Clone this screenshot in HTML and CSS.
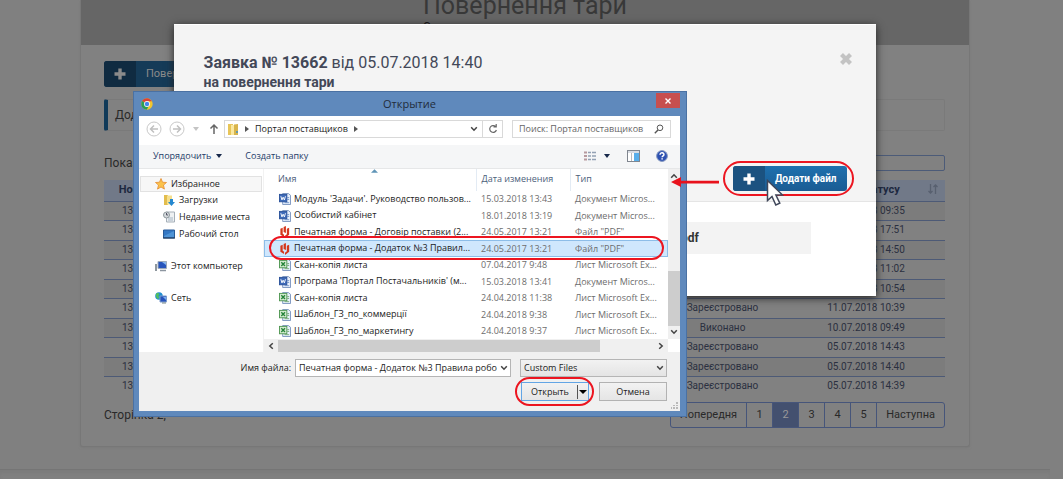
FILE: index.html
```html
<!DOCTYPE html>
<html lang="uk">
<head>
<meta charset="utf-8">
<title>Повернення тари</title>
<link rel="stylesheet" href="styles.css">
</head>
<body>
<svg class="defs" aria-hidden="true">
  <symbol id="plus" viewBox="0 0 12 12"><path d="M4.3 0.5h3.4v3.8h3.8v3.4H7.700v3.800H4.300V7.700H.5V4.300h3.800z" fill="currentColor"/></symbol>
  <symbol id="chevron" viewBox="0 0 8 8"><path d="M1.200 2.200 4 5.200 6.800 2.200" fill="none" stroke="currentColor" stroke-width="1.500"/></symbol>
  <symbol id="caret" viewBox="0 0 8 8"><path d="M1 2h6L4 6z" fill="currentColor"/></symbol>
  <symbol id="word" viewBox="0 0 13 13"><path d="M4 .5h6l2.500 2v10H4z" fill="#e9f1fc" stroke="#7691bd"/><path d="M9 5h2M9 7h2M6 10.500h5" stroke="#6f92c9"/><rect x=".5" y="1.500" width="8" height="8" fill="#3d6ab8" stroke="#2b529a"/><path d="m2 3.500 1.200 4 1.300-3 1.300 3L7 3.500" fill="none" stroke="#fff"/></symbol>
  <symbol id="excel" viewBox="0 0 13 13"><path d="M4 .5h6l2.500 2v10H4z" fill="#e9f1fc" stroke="#7691bd"/><path d="M9 5h2M9 7h2M6 10.500h5" stroke="#72a874"/><rect x=".5" y="1.500" width="8" height="8" fill="#d5ecd0" stroke="#4d9550"/><path d="m2.500 3.500 4 4m0-4-4 4" fill="none" stroke="#26833a" stroke-width="1.500"/></symbol>
  <symbol id="pdf" viewBox="0 0 13 13"><path d="M1.500 3 4 2v6.500l1.500 1v2.500L1.500 9.500zM5 1l2.500-1v7.500L5 6.500zM8.500 3 11 2v7.500L6.500 13v-2.500l2-1.500z" fill="#d5371c"/></symbol>
</svg>

<div class="stage">
  <main class="card">
    <header class="banner"><h1>Повернення тари</h1><p>С</p></header>
    <div class="card-body">
      <button class="action muted"><span class="action-icon"><svg><use href="#plus"/></svg></span><span class="action-text">Повернення</span></button>
      <div class="note">Додати</div>
      <div class="filter"><label for="search">Показати</label><input id="search" type="text"></div>
      <table class="requests">
        <colgroup><col class="c-num"><col><col class="c-status"><col class="c-date"></colgroup>
        <thead><tr><th>Номер</th><th></th><th>Статус</th><th>Дата статусу<svg class="sort" viewBox="0 0 10 10"><path d="M2.500 0v9M.5 7l2 2 2-2M7.500 10V1M5.500 3l2-2 2 2" fill="none" stroke="currentColor" stroke-width="1.300"/></svg></th></tr></thead>
        <tbody>
          <tr><td>13671</td><td></td><td>Виконано</td><td>12.07.2018 09:35</td></tr>
          <tr><td>13670</td><td></td><td>Виконано</td><td>11.07.2018 17:51</td></tr>
          <tr><td>13669</td><td></td><td>Виконано</td><td>11.07.2018 14:50</td></tr>
          <tr><td>13668</td><td></td><td>Виконано</td><td>11.07.2018 11:02</td></tr>
          <tr><td>13667</td><td></td><td>Виконано</td><td>11.07.2018 10:54</td></tr>
          <tr><td>13666</td><td></td><td>Зареєстровано</td><td>11.07.2018 10:39</td></tr>
          <tr><td>13665</td><td></td><td>Виконано</td><td>10.07.2018 09:49</td></tr>
          <tr><td>13663</td><td></td><td>Зареєстровано</td><td>05.07.2018 14:43</td></tr>
          <tr><td>13662</td><td></td><td>Зареєстровано</td><td>05.07.2018 14:40</td></tr>
          <tr><td>13661</td><td></td><td>Зареєстровано</td><td>05.07.2018 14:39</td></tr>
        </tbody>
      </table>
      <div class="table-foot">
        <span>Сторінка 2,</span>
        <nav class="pages"><a href="#">Попередня</a><a href="#">1</a><a href="#" class="current">2</a><a href="#">3</a><a href="#">4</a><a href="#">5</a><a href="#">Наступна</a></nav>
      </div>
    </div>
  </main>
  <footer class="site-foot"></footer>

  <section class="modal">
    <div class="modal-head">
      <div class="modal-title">
        <h2><b>Заявка № 13662</b> від 05.07.2018 14:40</h2>
        <button class="modal-close" aria-label="Закрити"><svg viewBox="0 0 14 14"><path d="M2.500 2.500l9 9m0-9-9 9" stroke="currentColor" stroke-width="4.200"/></svg></button>
      </div>
      <p>на повернення тари</p>
      <button class="action bright"><span class="action-icon"><svg><use href="#plus"/></svg></span><span class="action-text">Додати файл</span></button>
    </div>
    <div class="modal-body"><div class="attachment">.pdf</div></div>
  </section>

  <section class="dialog">
    <div class="titlebar">
      <svg class="chrome" viewBox="0 0 12 12"><circle cx="6" cy="6" r="5.700" fill="#f3c62e"/><path d="M6 6 1.100 3.100A5.700 5.700 0 0 1 10.900 3.200H6z" fill="#dc4336"/><path d="M1.100 3.100A5.700 5.700 0 0 0 5.700 11.700L8 7.500 6 6z" fill="#2a9e57"/><circle cx="6" cy="6" r="2.900" fill="#fff"/><circle cx="6" cy="6" r="2.200" fill="#4686ea"/></svg>
      <span class="title">Открытие</span>
      <button class="win-close" aria-label="Закрыть"><svg viewBox="0 0 8 8"><path d="m1.500 1.500 5 5m0-5-5 5" stroke="#fff" stroke-width="1.400"/></svg></button>
    </div>
    <div class="client">
      <div class="address-row">
        <button class="round" aria-label="Назад"><svg viewBox="0 0 16 16"><circle cx="8" cy="8" r="7" fill="none" stroke="#c9c9c9"/><path d="M12 8H4.500M8 4.500 4.500 8 8 11.500" fill="none" stroke="#c0c0c0" stroke-width="1.500"/></svg></button>
        <button class="round" aria-label="Вперёд"><svg viewBox="0 0 16 16"><circle cx="8" cy="8" r="7" fill="none" stroke="#c9c9c9"/><path d="M4 8h7.500M8 4.500 11.500 8 8 11.500" fill="none" stroke="#c0c0c0" stroke-width="1.500"/></svg></button>
        <svg class="s8 pale"><use href="#caret"/></svg>
        <button class="up" aria-label="Вверх"><svg viewBox="0 0 10 12"><path d="M5 11V2M1.500 5.500 5 2l3.500 3.500" fill="none" stroke="#666" stroke-width="1.500"/></svg></button>
        <div class="path">
          <svg class="folder" viewBox="0 0 12 13"><path d="M1 1h5v11H1z" fill="#e8c558"/><path d="M4 2h4v10H4z" fill="#fae8a0"/><path d="M7 1.500 11 1v11H7z" fill="#d9b54c"/><path d="M9 8h2v2H9z" fill="#6299b0"/></svg>
          <svg class="s8"><path d="m2 1 4 3-4 3z" fill="#555"/></svg>
          <span>Портал поставщиков</span>
          <svg class="s8"><path d="m2 1 4 3-4 3z" fill="#555"/></svg>
          <svg class="s8 end"><use href="#chevron"/></svg>
          <button class="refresh" aria-label="Обновить"><svg viewBox="0 0 10 10"><path d="M7.500 2.500A3.400 3.400 0 1 0 8.400 6M5.500 2.800h2.700V0" fill="none" stroke="#666" stroke-width="1.200"/></svg></button>
        </div>
        <div class="find"><input type="text" aria-label="Поиск" placeholder="Поиск: Портал поставщиков"><svg viewBox="0 0 10 10"><circle cx="6" cy="3.800" r="2.800" fill="none" stroke="#555"/><path d="M4 6 .8 9.200" stroke="#555" stroke-width="1.400"/></svg></div>
      </div>
      <div class="toolbar">
        <button>Упорядочить <svg class="s8"><use href="#caret"/></svg></button>
        <button>Создать папку</button>
        <div class="tools">
          <svg class="view" viewBox="0 0 12 10"><path d="M0 1.500h3M0 5h3M0 8.500h3" stroke="#b79a9f" stroke-width="2"/><path d="M4 1.500h3M8 1.500h4M4 5h3M8 5h4M4 8.500h3M8 8.500h4" stroke="#93a1b4" stroke-width="1.400"/></svg>
          <svg class="s8"><use href="#caret"/></svg>
          <svg class="pane-icon" viewBox="0 0 13 12"><rect x=".5" y=".5" width="12" height="11" fill="#fff" stroke="#80868f"/><path d="M1 2h11" stroke="#b2bac8"/><path d="M4.500 3v8" stroke="#bbb"/><rect x="7" y="3" width="5" height="8" fill="#58aeea"/></svg>
          <svg class="help" viewBox="0 0 12 12"><circle cx="6" cy="6" r="5.400" fill="#2e52b2" stroke="#8598bf"/><path d="M4 4.800C4 2 8.300 2.400 7.900 4.800 7.700 5.900 6.200 6 6.100 7.300M6.100 8.200v1.400" fill="none" stroke="#fff" stroke-width="1.500"/></svg>
        </div>
      </div>
      <div class="browser">
        <nav class="places">
          <a href="#" class="root selected"><svg viewBox="0 0 12 12"><path d="m6 .5 1.500 3.700 4 .3-3 2.600.9 4L6 9l-3.500 2.100 1-4-3-2.600 4-.3z" fill="#fbc34c" stroke="#e58c2e" stroke-width=".8"/></svg>Избранное</a>
          <a href="#"><svg viewBox="0 0 12 12"><path d="M1 1h4v10H1z" fill="#e3bd4d"/><path d="M4 1.500h5v9H4z" fill="#f5df8d"/><path d="M7 5h3v3h2l-3.500 4L5 8h2z" fill="#2588d0"/></svg>Загрузки</a>
          <a href="#"><svg viewBox="0 0 12 12"><path d="M3.500 1h8v10h-8z" fill="#eef1f3" stroke="#a5afb8"/><path d="M5 7h5M5 9h5" stroke="#a5b5c5"/><circle cx="3.500" cy="4" r="3" fill="#d5dadd" stroke="#8d979c"/><path d="M3.500 2v2H5" fill="none" stroke="#556"/></svg>Недавние места</a>
          <a href="#"><svg viewBox="0 0 12 12"><path d="M.5 2h11v8H.5z" fill="#3478c4" stroke="#285b98"/><path d="M1 8 11 3v6H1z" fill="#4f94d6"/><path d="M0 10h12" stroke="#243c59"/></svg>Рабочий стол</a>
          <a href="#" class="root"><svg viewBox="0 0 12 12"><path d="M3 1.500h8.500v7H3z" fill="#2855bb" stroke="#9eaaba"/><path d="M7 2h4v3z" fill="#86b6ef"/><path d="M5 10.500h6" stroke="#8d96a0" stroke-width="1.500"/><path d="M1 4v7" stroke="#8e979e" stroke-width="2"/></svg>Этот компьютер</a>
          <a href="#" class="root"><svg viewBox="0 0 12 12"><circle cx="4" cy="4" r="3.800" fill="#238fd1"/><path d="M2 1c3 0 3 2 1 3 2 1 1 2 0 3C1 6 0 2 2 1" fill="#53bf5d"/><path d="M5 4h6.500v6H5z" fill="#2652bb" stroke="#7e9dcc"/><path d="M8 5h3v3z" fill="#79aff2"/><path d="M7 11h4" stroke="#788"/></svg>Сеть</a>
        </nav>
        <div class="listing">
          <div class="list-view">
            <table class="files">
              <colgroup><col><col class="f-date"><col class="f-type"></colgroup>
              <thead><tr><th>Имя<svg class="sort-mark" viewBox="0 0 8 4"><path d="M0 4 4 0l4 4z" fill="#5f94b7"/></svg></th><th>Дата изменения</th><th>Тип</th></tr></thead>
              <tbody>
                <tr><td><svg><use href="#word"/></svg>Модуль 'Задачи'. Руководство пользов...</td><td>15.03.2018 13:43</td><td>Документ Micros...</td></tr>
                <tr><td><svg><use href="#word"/></svg>Особистий кабінет</td><td>18.01.2018 13:19</td><td>Документ Micros...</td></tr>
                <tr><td><svg><use href="#pdf"/></svg>Печатная форма - Договір поставки (2...</td><td>24.05.2017 13:21</td><td>Файл "PDF"</td></tr>
                <tr class="picked"><td><svg><use href="#pdf"/></svg>Печатная форма - Додаток №3 Правил...</td><td>24.05.2017 13:21</td><td>Файл "PDF"</td></tr>
                <tr><td><svg><use href="#excel"/></svg>Скан-копія листа</td><td>07.04.2017 9:48</td><td>Лист Microsoft Ex...</td></tr>
                <tr><td><svg><use href="#word"/></svg>Програма 'Портал Постачальників' (м...</td><td>15.03.2018 13:41</td><td>Документ Micros...</td></tr>
                <tr><td><svg><use href="#excel"/></svg>Скан-копія листа</td><td>24.04.2018 11:38</td><td>Лист Microsoft Ex...</td></tr>
                <tr><td><svg><use href="#excel"/></svg>Шаблон_ГЗ_по_коммерції</td><td>24.04.2018 9:38</td><td>Лист Microsoft Ex...</td></tr>
                <tr><td><svg><use href="#excel"/></svg>Шаблон_ГЗ_по_маркетингу</td><td>24.04.2018 9:37</td><td>Лист Microsoft Ex...</td></tr>
              </tbody>
            </table>
            <div class="vbar"><svg class="s8 flip"><use href="#chevron"/></svg><i></i><svg class="s8"><use href="#chevron"/></svg></div>
          </div>
          <div class="hbar"><svg class="s8 left"><use href="#chevron"/></svg><i></i><svg class="s8 right"><use href="#chevron"/></svg></div>
        </div>
      </div>
      <form class="bottom">
        <label for="fname">Имя файла:</label>
        <div class="combo"><input id="fname" type="text" value="Печатная форма - Додаток №3 Правила робо"><svg class="s8"><use href="#chevron"/></svg></div>
        <div class="pick"><select aria-label="Тип файлов"><option>Custom Files</option></select><svg class="s8"><use href="#chevron"/></svg></div>
        <div class="buttons">
          <button type="button" class="open"><span>Открыть</span><svg viewBox="0 0 10 14"><path d="M.5 0v14" stroke="#555"/><path d="M2 5h8l-4 4z" fill="#000"/></svg></button>
          <button type="button">Отмена</button>
        </div>
        <svg class="grip" viewBox="0 0 7 7"><path d="M5 0h2v2H5zM5 3h2v1H5zM2 3h2v1H2zM5 5h2v2H5zM2 5h2v2H2zM0 5h1v2H0z" fill="#b9b9b9"/></svg>
      </form>
    </div>
  </section>

  <div class="ring ring-add"></div>
  <div class="ring ring-file"></div>
  <div class="ring ring-open"></div>
  <svg class="arrow" viewBox="0 0 50 12"><path d="M0 6 10 1v3.700h38v2.800H10V11z" fill="#e8121c"/></svg>
  <svg class="cursor" viewBox="0 0 18 28"><path d="M1.500 1.500v20l4.500-4 3.800 8.500 4-1.800-3.900-8.200h6.600z" fill="#fff" stroke="#40475a" stroke-width="1.500"/></svg>
</div>
</body>
</html>
```

FILE: styles.css
```css
* { box-sizing: border-box; }
body { margin: 0; background: #808080; font: 12px/16px Roboto, sans-serif; color: #292929; }
button, input, select { font: inherit; color: inherit; margin: 0; padding: 0; border: 0; background: none; }
a { color: inherit; text-decoration: none; }
h1, h2, p { margin: 0; }
svg { display: block; flex: none; }
table { border-collapse: collapse; table-layout: fixed; width: 100%; }
td, th { padding: 0; }
.defs { position: absolute; width: 0; height: 0; }
.stage { position: relative; min-height: 479px; padding-right: 13px; overflow: hidden; }

/* page under the modal */
.card { max-width: 890px; margin: 0 auto; border: 1px solid #777; border-top: 0; border-radius: 0 0 3px 3px; box-shadow: 0 1px 2px #7a7a7a; background: #818181; }
.banner { height: 45px; background: #666; text-align: center; color: #383838; overflow: hidden; }
.banner h1 { font-size: 25px; line-height: 30px; font-weight: 400; margin-top: -9px; }
.banner p { color: #111; font-size: 12px; line-height: 12px; width: 204px; margin: 0 auto; text-align: left; }
.card-body { padding: 16px 24px 18px 23px; }
.action { display: flex; align-items: stretch; border-radius: 3px; overflow: hidden; }
.action-icon { display: flex; align-items: center; justify-content: center; width: 32px; }
.action-icon svg { width: 12px; height: 12px; }
.action-text { padding: 0 10px; }
.muted { height: 26px; line-height: 26px; font-size: 11px; background: #153b58; color: #8b8b8b; }
.muted .action-icon { background: #102b41; }
.note { margin-top: 12px; height: 32px; line-height: 30px; padding-left: 7px; border: 1px solid #7a7a7a; border-left: 4px solid #103a59; border-radius: 2px; }
.filter { display: flex; justify-content: space-between; align-items: center; margin-top: 24px; height: 16px; }
.filter input { width: 160px; height: 16px; border: 1px solid #4c5b78; border-radius: 2px; }
.requests { margin-top: 9px; font-size: 10px; line-height: 12px; text-align: center; color: #2b3040; }
.c-num { width: 64px; }
.c-status { width: 129px; }
.c-date { width: 158px; }
.requests thead th { position: relative; height: 21px; font-size: 11px; background: #717988; color: #1d2840; }
.sort { position: absolute; right: 7px; top: 4px; width: 10px; height: 10px; color: #58606f; }
.requests tr { height: 19px; border-bottom: 1px solid #4d5a76; }
.requests tbody tr:nth-child(even) { height: 20px; }
.requests tbody tr:nth-child(odd) { background: #7c7c7c; }
.requests tbody tr:last-child { border-bottom: 0; }
.table-foot { display: flex; justify-content: space-between; align-items: center; margin-top: 6px; }
.pages { display: flex; border: 1px solid #46557a; border-radius: 3px; font-size: 11px; line-height: 24px; text-align: center; }
.pages a { min-width: 26px; padding: 0 9px; border-left: 1px solid #46557a; }
.pages a:first-child { border-left: 0; }
.pages .current { background: #43506f; color: #999; }
.site-foot { height: 11px; margin-top: 22px; border-top: 1px solid #757575; box-shadow: inset 0 3px 3px #7b7b7b; }

/* request modal */
.modal { position: absolute; top: 24px; left: calc(50% - 358px); width: 702px; background: #fff; box-shadow: 0 2px 8px #222; }
.modal-head { height: 178px; padding: 27px 23px 0 30px; background: #f4f4f4; border-top: 1px solid #fff; border-bottom: 1px solid #e5e5e5; color: #434858; }
.modal-title { display: flex; justify-content: space-between; align-items: flex-start; }
.modal h2 { font-size: 16px; line-height: 21px; font-weight: 400; }
.modal-head p { font-size: 14px; line-height: 18px; font-weight: 700; }
.modal-close { color: #c3c3c3; }
.modal-close svg { width: 14px; height: 14px; }
.bright { height: 25px; margin: 75px 6px 0 auto; background: linear-gradient(#1e70ae, #1b5c93); color: #fff; font-size: 10px; line-height: 25px; font-weight: 700; }
.bright .action-icon { background: #1b5280; }
.modal-body { padding: 20px 65px 42px 30px; }
.attachment { height: 32px; line-height: 32px; padding-left: 474px; background: #f3f3f3; color: #333; font-weight: 700; }

/* file dialog */
.dialog { position: absolute; left: 133px; top: 91px; width: 554px; padding: 1px 6px 5px 5px; background: #5f89bc; border: 1px solid #4a71a3; font: 9px/12px "Open Sans", sans-serif; color: #1c1c1c; }
.titlebar { display: flex; align-items: center; height: 23px; padding-bottom: 2px; }
.chrome { width: 12px; height: 12px; margin-left: 2px; }
.title { flex: 1; padding-left: 10px; font-size: 11px; line-height: 16px; text-align: center; color: #222c3a; }
.win-close { display: grid; place-items: center; align-self: flex-start; width: 24px; height: 15px; background: #c74f4f; }
.win-close svg { width: 8px; height: 8px; }
.client { background: #fff; }
.s8 { width: 8px; height: 8px; color: #444; }
.pale { color: #c4c4c4; }
.address-row { display: flex; align-items: center; height: 29px; padding: 0 9px 3px 7px; }
.round { margin-right: 7px; }
.round svg { width: 16px; height: 16px; }
.up { margin: 0 5px 0 9px; }
.up svg { width: 10px; height: 12px; }
.path { display: flex; align-items: center; flex: 1; gap: 4px; height: 18px; padding-left: 2px; border: 1px solid #d9d9d9; }
.folder { width: 12px; height: 13px; }
.end { margin-left: auto; }
.refresh { display: grid; place-items: center; width: 20px; height: 16px; border-left: 1px solid #d9d9d9; }
.refresh svg { width: 10px; height: 10px; }
.find { display: flex; align-items: center; width: 159px; height: 18px; margin-left: 9px; padding: 0 6px; border: 1px solid #d9d9d9; }
.find input { flex: 1; min-width: 0; }
.find input::placeholder { color: #666; opacity: 1; }
.find svg { width: 10px; height: 10px; }
.toolbar { display: flex; align-items: center; height: 24px; gap: 22px; padding: 0 12px 2px 14px; background: #f5f6f7; border-bottom: 1px solid #e6e7e8; color: #243c68; }
.toolbar button { display: flex; align-items: center; gap: 4px; }
.toolbar .s8 { color: #17284a; }
.tools { display: flex; align-items: center; margin-left: auto; }
.view { width: 12px; height: 10px; margin-right: 7px; }
.pane-icon { width: 13px; height: 12px; margin: 0 16px; }
.help { width: 12px; height: 12px; }
.browser { display: flex; }
.places { width: 125px; padding: 7px 1px 0; border-right: 1px solid #f2f2f2; }
.places a { display: flex; align-items: center; gap: 4px; height: 16px; padding-left: 23px; margin-bottom: 1px; }
.places a.root { padding-left: 15px; margin-top: 16px; }
.places a.selected { margin-top: 0; margin-bottom: 0; padding-left: 14px; border: 1px solid #e2e2e2; background: #f7f7f7; }
.places svg { width: 12px; height: 12px; }
.listing { flex: 1; min-width: 0; }
.list-view { display: flex; }
.files { flex: 1; width: auto; text-align: left; }
.f-date { width: 94px; }
.f-type { width: 98px; }
.files th { position: relative; height: 22px; padding: 0 0 3px 5px; font-weight: 400; color: #4c607a; border-left: 1px solid #e3ebf4; white-space: nowrap; }
.files th:first-child { padding-left: 14px; border-left: 0; }
.sort-mark { position: absolute; left: 107px; top: 0; width: 7px; height: 4px; }
.files tr { height: 16px; }
.files tbody tr:nth-child(even) { height: 17px; }
.files td { padding-left: 5px; color: #6d6d6d; white-space: nowrap; }
.files td:first-child { padding-left: 15px; color: #1c1c1c; }
.files td svg { display: inline-block; vertical-align: middle; width: 12px; height: 12px; margin-right: 3px; }
.files .picked { background: #cfe7fd; box-shadow: inset 0 0 0 1px #8dbde8; }
.vbar { display: flex; flex-direction: column; align-items: center; width: 12px; padding: 3px 0; background: #f0f0f0; }
.vbar i { width: 12px; height: 55px; margin: auto 0 2px; background: #cdcdcd; }
.flip { transform: rotate(180deg); }
.left { transform: rotate(90deg); }
.right { transform: rotate(-90deg); }
.hbar { display: flex; align-items: center; height: 13px; margin-right: 12px; padding: 0 3px; background: #f0f0f0; }
.hbar i { width: 322px; height: 12px; margin: 0 auto 0 3px; background: #cdcdcd; }
.bottom { position: relative; display: grid; grid-template-columns: 152px 216px 147px; column-gap: 4px; row-gap: 5px; align-items: center; padding: 7px 0 10px; background: #f0f0f0; }
.bottom label { text-align: right; }
.combo, .pick { display: flex; align-items: center; height: 18px; border: 1px solid #b5b5b5; background: #fff; }
.combo input { flex: 1; min-width: 0; padding-left: 3px; }
.combo .s8, .pick .s8 { margin: 0 2px; }
.pick { margin-left: 5px; width: 147px; background: linear-gradient(#f2f2f2, #e4e4e4); }
.pick select { appearance: none; flex: 1; min-width: 0; padding-left: 3px; }
.buttons { grid-column: 3; display: flex; gap: 10px; width: 147px; margin-left: 6px; }
.buttons button { width: 68px; height: 19px; border: 1px solid #b2b2b2; background: linear-gradient(#f2f2f2, #e5e5e5); }
.buttons .open { display: flex; align-items: center; justify-content: space-between; padding: 0 1px 0 9px; border-color: #62a5e5; }
.open svg { width: 10px; height: 14px; }
.grip { position: absolute; right: 2px; bottom: 2px; width: 7px; height: 7px; }

/* callouts */
.ring { position: absolute; border: 2px solid #ec1520; border-radius: 18px; }
.ring-add { left: 723px; top: 161px; width: 131px; height: 35px; }
.ring-file { left: 269px; top: 236px; width: 395px; height: 24px; }
.ring-open { left: 515px; top: 377px; width: 79px; height: 29px; }
.arrow { position: absolute; left: 671px; top: 176px; width: 50px; height: 12px; }
.cursor { position: absolute; left: 766px; top: 179px; width: 18px; height: 28px; }
```
